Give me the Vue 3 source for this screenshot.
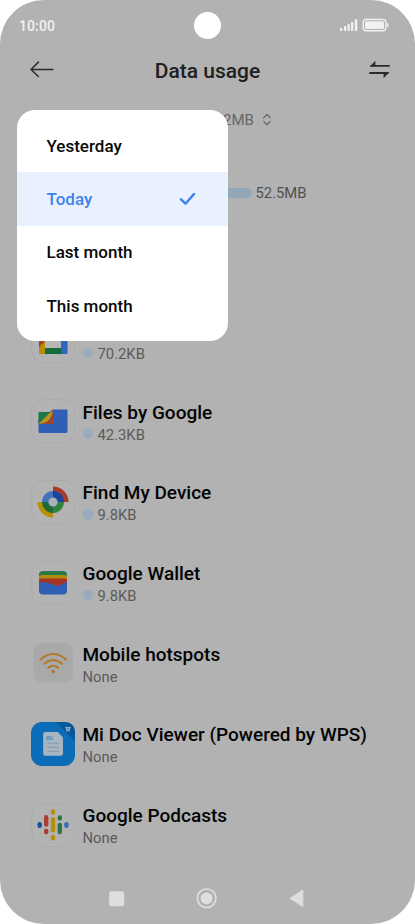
<script setup>
const menu = [
  { label: 'Yesterday' },
  { label: 'Today', selected: true },
  { label: 'Last month' },
  { label: 'This month' },
]
const apps = [
  { icon: 'meet', name: 'Meet', usage: '70.2KB', dot: true },
  { icon: 'files', name: 'Files by Google', usage: '42.3KB', dot: true },
  { icon: 'find', name: 'Find My Device', usage: '9.8KB', dot: true },
  { icon: 'wallet', name: 'Google Wallet', usage: '9.8KB', dot: true },
  { icon: 'hotspot', name: 'Mobile hotspots', usage: 'None' },
  { icon: 'doc', name: 'Mi Doc Viewer (Powered by WPS)', usage: 'None' },
  { icon: 'podcasts', name: 'Google Podcasts', usage: 'None' },
]
</script>

<template>
  <div class="phone">
    <div class="status">
      <span class="clock">10:00</span>
      <span class="camera"></span>
      <svg class="signals" width="52" height="14" viewBox="0 0 52 14">
        <g fill="#f1f1f1">
          <rect x="1" y="10" width="2.3" height="3" rx=".7" />
          <rect x="5" y="8" width="2.3" height="5" rx=".7" />
          <rect x="8.5" y="6" width="2.3" height="7" rx=".7" />
          <rect x="12" y="4" width="2.3" height="9" rx=".7" />
          <rect x="15.8" y="1.3" width="2.5" height="11.7" rx=".7" />
          <rect x="26" y="3.2" width="19" height="7.8" rx="1.5" />
          <path d="M48 5q1.6 0 1.6 2T48 9z" />
        </g>
        <rect x="24.2" y="1.5" width="22.7" height="11.2" rx="3" fill="none" stroke="#f1f1f1" stroke-width="1.4" />
      </svg>
    </div>

    <header class="header">
      <svg width="26" height="20" viewBox="0 0 26 20" fill="none" stroke="#2b2b2b" stroke-width="1.5" stroke-linecap="round" stroke-linejoin="round">
        <path d="M24 9.5H2M9.4 2.1 2 9.5l7.4 7" />
      </svg>
      <h1>Data usage</h1>
      <svg width="22" height="20" viewBox="0 0 22 20">
        <path d="M2 5.9h18M1 13h18" fill="none" stroke="#2b2b2b" stroke-width="1.8" stroke-linecap="round" />
        <path d="M1 6.4 6.4.8v5.6zM20 12.5l-5.4 5.7v-5.7z" fill="#2b2b2b" />
      </svg>
    </header>

    <section class="summary">
      <span>2MB</span>
      <svg width="10" height="14" viewBox="0 0 10 14" fill="none" stroke="#6a6674" stroke-width="1.3" stroke-linecap="round" stroke-linejoin="round">
        <path d="M1.7 4.7 5 1.4l3.3 3.3M1.7 8.4 5 11.7l3.3-3.3" />
      </svg>
    </section>

    <section class="total">
      <span class="bar"></span>
      <span>52.5MB</span>
    </section>

    <main class="list">
      <div v-for="app in apps" :key="app.name" class="row">
        <svg class="tile" width="44" height="44" viewBox="0 0 44 44">
          <rect v-if="app.icon !== 'doc' && app.icon !== 'hotspot'" x=".7" y=".5" width="43" height="43" rx="12" fill="#b3b3b3" stroke="#a9a9a9" stroke-width=".7" />
          <g v-if="app.icon === 'meet'">
            <path d="M8 14h22v17H8z" fill="#b5b7b7" />
            <path d="M8 8h22v8H8z" fill="#3265bd" />
            <path d="M30 8h4q2.5 0 2.5 2.5V34q0 1-1 1H30z" fill="#3265bd" />
            <path d="M8 8v20h6V8z" fill="#a63a2d" />
            <path d="m8 28 6-6v13H9q-1 0-1-1z" fill="#b98c05" />
            <path d="M14 29h16.5v6H14z" fill="#146c39" />
          </g>
          <g v-else-if="app.icon === 'files'">
            <path d="M22 10.6h13.2q1.3 0 1.3 1.3v20.7q0 1.3-1.3 1.3H8.8q-1.3 0-1.3-1.3V20z" fill="#3060b6" />
            <path d="M7.5 14.1q0-1.1 1.1-1.1h11.2L7.5 25z" fill="#1d7843" />
            <path d="m7.5 25 14.1-14.1.2.1q-.2 5.5-3.2 9.3-2.9 3.9-9.2 4.7z" fill="#bd9415" />
            <path d="M22 10.6V25H8.5q8.600-1 11-4.900 2-3.500 2.200-9.200z" fill="#a5412a" />
          </g>
          <g v-else-if="app.icon === 'find'">
            <path d="M22 6.5A15.5 15.5 0 0 1 37.5 22H22z" fill="#a93b2d" />
            <path d="M22 37.5A15.5 15.5 0 0 1 6.5 22H22z" fill="#b98f05" />
            <path d="M11 22a11 11 0 0 1 11-11v11z" fill="#4370ba" />
            <path d="M22 11a11 11 0 0 1 11 11H22z" fill="#17469a" />
            <path d="M11 22a11 11 0 0 0 11 11V22z" fill="#206a36" />
            <path d="M22 33a11 11 0 0 0 11-11H22z" fill="#30853e" />
            <circle cx="22" cy="22" r="4.6" fill="#a8b1bd" />
          </g>
          <g v-else-if="app.icon === 'wallet'">
            <rect x="8" y="10.2" width="28" height="23.3" rx="4" fill="#2f5fb5" />
            <path d="M8 16v-1.800q0-4 4-4h20q4 0 4 4V16z" fill="#287b3c" />
            <path d="M8 20v-4.500q0-1.600 3-1.600h22q3 0 3 1.600V20z" fill="#b38b13" />
            <path d="M8 21v-2q0-1.400 3-1.400h22q3 0 3 1.400v2l-7 3.300q-2 .8-4 .1-9-3.400-17-3.400z" fill="#a43525" />
          </g>
          <g v-else-if="app.icon === 'hotspot'">
            <rect x="2.5" y="2.2" width="39.3" height="39.3" rx="8.5" fill="#a9a9a9" />
            <g fill="none" stroke="#b37a2b" stroke-width="1.9" stroke-linecap="round">
              <path d="M9.300 18.700q12.900-11.300 25.800 0M13.200 22.800q9-7.600 18 0M17.200 26.700q5-4 10 0" />
            </g>
            <circle cx="22.2" cy="30.6" r="1.8" fill="#b37a2b" />
          </g>
          <g v-else-if="app.icon === 'doc'">
            <rect x="0" y="0" width="44" height="44" rx="11" fill="#0b6db7" />
            <path d="M25 0h8q11 0 11 11v8z" fill="#07579c" />
            <path d="M14.500 10h12.300l5.200 5.500v16q0 2.300-2.300 2.300H14.500q-2.300 0-2.300-2.300V12.300q0-2.300 2.300-2.300z" fill="#a7b5c1" />
            <path d="M16 21.200h12M16 25.300h12M16 29.400h12" stroke="#839bb2" stroke-width="1" />
            <path d="M16 18v-3.200h3.200V18M17.700 16.500V18M21.200 14.700V18" fill="none" stroke="#3c83b8" stroke-width=".9" />
            <path d="M34.200 5.500h5.600M35 5.700l1 3 1-2 1 2 1-3" fill="none" stroke="#91adc4" stroke-width="1.100" />
          </g>
          <g v-else stroke-width="4.4" stroke-linecap="round">
            <path d="M8.700 21.300v1.500" stroke="#13539d" />
            <path d="M15.200 14.300v7.200M15.200 28v1" stroke="#a83d32" />
            <path d="M22 8.400v1.200M22 16.500v10.700M22 34v1.200" stroke="#b98c09" />
            <path d="M28.800 14.400v1M28.800 22v7" stroke="#2d7840" />
            <path d="M35.400 21.300v1.500" stroke="#3e69b5" />
          </g>
        </svg>
        <div class="info">
          <div class="name">{{ app.name }}</div>
          <div class="usage"><i v-if="app.dot"></i>{{ app.usage }}</div>
        </div>
      </div>
    </main>

    <nav class="nav">
      <svg width="198" height="24" viewBox="0 0 198 24">
        <rect x="1.2" y="5.2" width="15" height="15" rx="2.2" fill="#dedede" />
        <circle cx="98.6" cy="12.3" r="9.3" fill="none" stroke="#dedede" stroke-width="1.7" />
        <circle cx="98.6" cy="12.3" r="5.9" fill="#dedede" />
        <path d="m182 12.3 12.8-8.2v16.4z" fill="#dedede" stroke="#dedede" stroke-linejoin="round" />
      </svg>
    </nav>

    <div class="menu">
      <div v-for="item in menu" :key="item.label" class="item" :class="{ selected: item.selected }">
        <span>{{ item.label }}</span>
        <svg v-if="item.selected" width="17" height="14" viewBox="0 0 17 14" fill="none" stroke="#3f82ec" stroke-width="2.5" stroke-linecap="round" stroke-linejoin="round">
          <path d="m2 7.300 4.500 4.400L15 2" />
        </svg>
      </div>
    </div>
  </div>
</template>

<style>
body { background: #fff; }
</style>

<style scoped>
.phone {
  position: relative;
  display: flex;
  flex-direction: column;
  box-sizing: border-box;
  width: 415px;
  height: 924px;
  overflow: hidden;
  border-radius: 44px;
  background: #b2b2b2;
  color: #030303;
  font-family: Roboto, sans-serif;
  white-space: nowrap;
}
.status {
  display: grid;
  grid-template-columns: 1fr 27px 1fr;
  align-items: center;
  height: 50px;
  padding: 0 24px 0 19px;
}
.clock {
  padding-top: 1.5px;
  color: #f1f1f1;
  font-size: 14px;
  font-weight: 500;
  letter-spacing: .1px;
}
.camera {
  width: 27px;
  height: 27px;
  margin-left: 2.5px;
  border-radius: 50%;
  background: #fff;
}
.signals { justify-self: end; }
.header {
  display: flex;
  align-items: center;
  justify-content: space-between;
  height: 40px;
  padding: 0 24px 0 29px;
}
.header h1 {
  margin: 2px 0 0 -9px;
  color: #202020;
  font-size: 21px;
  font-weight: 500;
  line-height: 24px;
}
.summary {
  display: flex;
  align-items: center;
  gap: 8px;
  height: 60px;
  padding-left: 223px;
  color: #656565;
  font-size: 15px;
}
.total {
  display: flex;
  align-items: center;
  gap: 4px;
  height: 86px;
  padding-left: 83px;
  color: #505050;
  font-size: 14.8px;
}
.bar {
  width: 168.5px;
  height: 10px;
  margin-top: -1px;
  border-radius: 5px;
  background: #94a7b8;
}
.list {
  display: grid;
  grid-template-rows: repeat(7, 80.67px);
  margin-top: 64.4px;
}
.row {
  display: flex;
  align-items: center;
  gap: 8px;
  padding-left: 30.5px;
}
.tile { flex: none; }
.info { padding-top: 3.5px; }
.name {
  font-size: 19px;
  font-weight: 500;
  line-height: 24px;
}
.usage {
  display: flex;
  align-items: center;
  gap: 4.5px;
  color: #5b5b5b;
  font-size: 14.8px;
  line-height: 21px;
}
.usage i {
  width: 10.5px;
  height: 10.5px;
  margin-top: -3px;
  border-radius: 50%;
  background: #98acbe;
}
.nav {
  display: flex;
  justify-content: center;
  margin-top: 21px;
  padding-right: 2px;
}
.menu {
  position: absolute;
  top: 110px;
  left: 17px;
  box-sizing: border-box;
  width: 211px;
  height: 231px;
  padding: 9px 0;
  overflow: hidden;
  border-radius: 18px;
  background: #fff;
}
.item {
  display: flex;
  align-items: center;
  justify-content: space-between;
  height: 53.3px;
  padding: 0 32px 0 29.5px;
  color: #080808;
  font-size: 17px;
  font-weight: 500;
}
.selected {
  background: #e9f0fe;
  color: #3f82ec;
}
</style>
